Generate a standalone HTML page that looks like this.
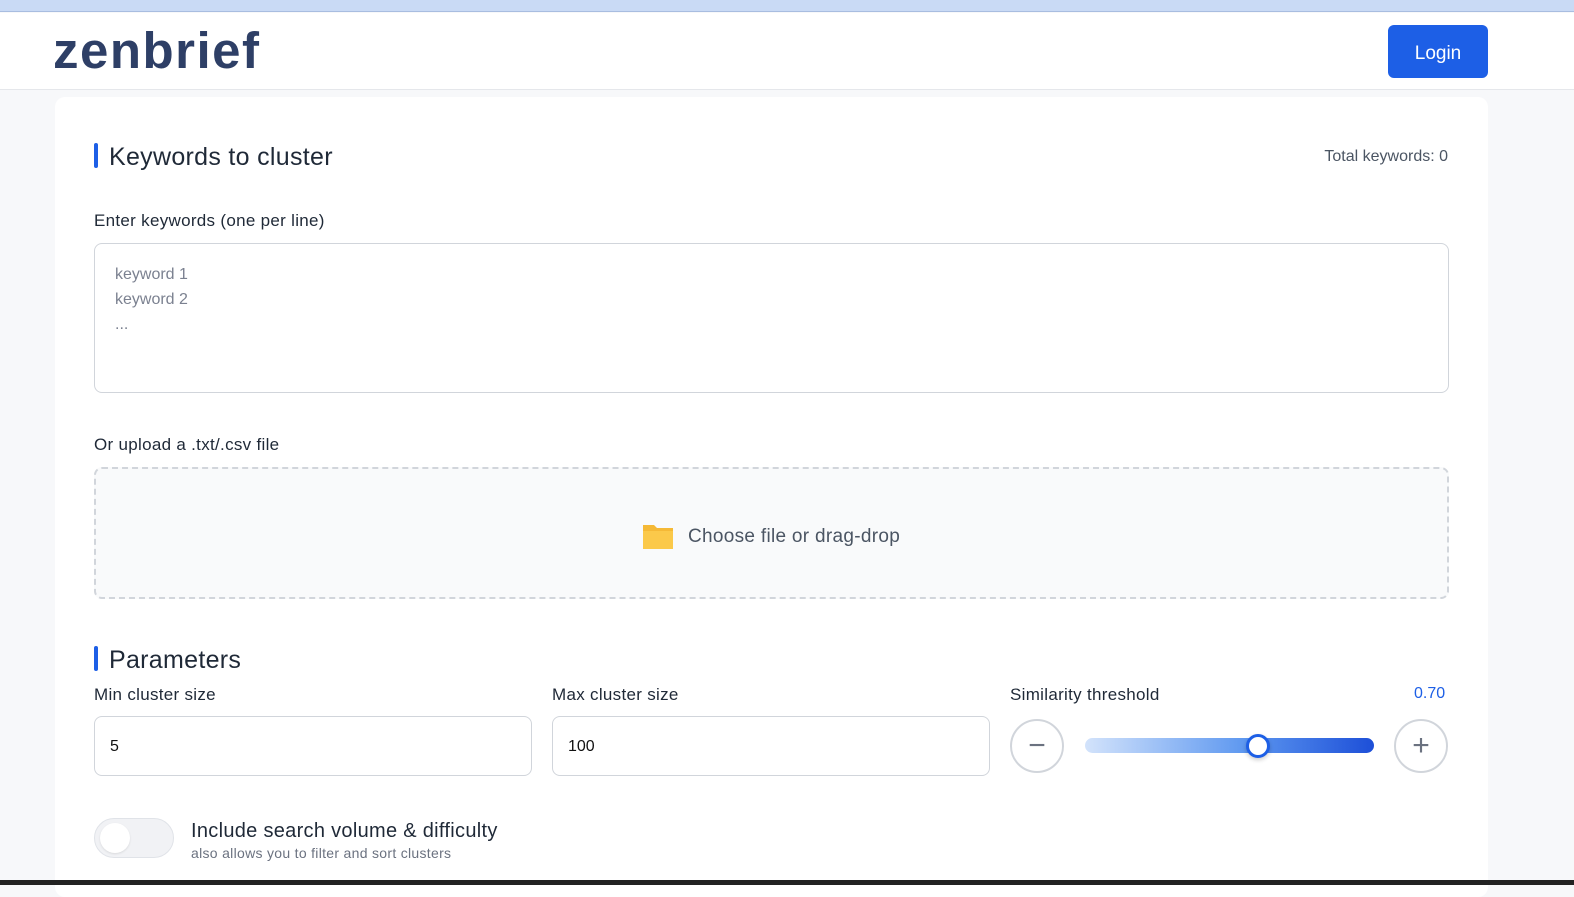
<!DOCTYPE html>
<html><head><meta charset="utf-8"><style>
*{box-sizing:border-box;margin:0;padding:0}
body{width:1574px;height:885px;overflow:hidden;background:#f7f8fa;font-family:"Liberation Sans",sans-serif;color:#1f2937;position:relative}
.topbar{position:absolute;left:0;top:0;width:1574px;height:12px;background:#c9daf5;border-bottom:1px solid #a9bde0}
.header{position:absolute;left:0;top:13px;width:1574px;height:77px;background:#fff;border-bottom:1px solid #e5e7eb}
.logo{position:absolute;left:53px;top:8px;font-size:51px;font-weight:bold;color:#2e3f66;letter-spacing:1.5px}
.login{position:absolute;left:1388px;top:12px;width:100px;height:53px;background:#1d5fe6;color:#fff;border-radius:6px;font-size:19px;text-align:center;line-height:57px}
.card{position:absolute;left:55px;top:97px;width:1433px;height:800px;background:#fff;border-radius:10px}
.abs{position:absolute}
.bar{position:absolute;width:4px;height:25px;background:#1d5fe6;border-radius:2px}
h2{font-size:25px;font-weight:normal;color:#1f2937;letter-spacing:.3px}
.lbl{font-size:17px;color:#1f2937;letter-spacing:.3px}
.ta{position:absolute;left:39px;top:146px;width:1355px;height:150px;border:1px solid #d1d5db;border-radius:8px;padding:18px 20px;font-size:16px;color:#7b8190;line-height:25px}
.drop{position:absolute;left:39px;top:370px;width:1355px;height:132px;border:2px dashed #d1d5db;border-radius:8px;background:#f9fafb}
.inp{position:absolute;top:619px;width:438px;height:60px;border:1px solid #d1d5db;border-radius:8px;padding-left:15px;line-height:60px;font-size:16px;color:#111}
.circ{position:absolute;top:622px;width:54px;height:54px;border:2px solid #d1d5db;border-radius:50%;color:#6b7280;font-size:30px;text-align:center;line-height:50px}
</style></head><body>
<div class="topbar"></div>
<div class="header"><div class="logo">zenbrief</div><div class="login">Login</div></div>
<div class="card">
<div class="bar" style="left:39px;top:46px"></div>
<h2 class="abs" style="left:54px;top:46px">Keywords to cluster</h2>
<div class="abs" style="right:40px;top:51px;font-size:16px;color:#4b5563">Total keywords: 0</div>
<div class="abs lbl" style="left:39px;top:114px">Enter keywords (one per line)</div>
<div class="ta">keyword 1<br>keyword 2<br>...</div>
<div class="abs lbl" style="left:39px;top:338px">Or upload a .txt/.csv file</div>
<div class="drop">
<svg class="abs" style="left:546px;top:53px" width="32" height="28" viewBox="0 0 32 28"><path d="M1 3h11l3 3h16v21H1z" fill="#f5b936"/><path d="M1 9h30v18H1z" fill="#fbc94a"/></svg>
<div class="abs" style="left:592px;top:57px;font-size:19px;color:#4b5563;letter-spacing:.3px">Choose file or drag-drop</div>
</div>
<div class="bar" style="left:39px;top:549px"></div>
<h2 class="abs" style="left:54px;top:549px">Parameters</h2>
<div class="abs lbl" style="left:39px;top:588px">Min cluster size</div>
<div class="abs lbl" style="left:497px;top:588px">Max cluster size</div>
<div class="abs lbl" style="left:955px;top:588px">Similarity threshold</div>
<div class="abs" style="left:1359px;top:588px;font-size:16px;color:#1d5fe6">0.70</div>
<div class="inp" style="left:39px">5</div>
<div class="inp" style="left:497px">100</div>
<div class="circ" style="left:955px">−</div>
<div class="circ" style="left:1339px">+</div>
<div class="abs" style="left:1030px;top:641px;width:289px;height:15px;border-radius:8px;background:linear-gradient(90deg,#d3e3fb,#5e98f0 55%,#1d4fd8)"></div>
<div class="abs" style="left:1191px;top:637px;width:24px;height:24px;border-radius:50%;background:#fff;border:3px solid #1d5fe6;box-shadow:0 2px 4px rgba(0,0,0,.2)"></div>
<div class="abs" style="left:39px;top:721px;width:80px;height:40px;border-radius:20px;background:#f1f2f5;border:1px solid #e0e3e8"></div>
<div class="abs" style="left:45px;top:726px;width:30px;height:30px;border-radius:50%;background:#fff;box-shadow:0 1px 2px rgba(0,0,0,.1)"></div>
<div class="abs" style="left:136px;top:723px;font-size:20px;color:#1f2937;letter-spacing:.3px">Include search volume &amp; difficulty</div>
<div class="abs" style="left:136px;top:748px;font-size:14px;color:#6b7280;letter-spacing:.3px">also allows you to filter and sort clusters</div>
</div>
<div class="abs" style="left:0;top:880px;width:1574px;height:5px;background:#222"></div>
</body></html>
